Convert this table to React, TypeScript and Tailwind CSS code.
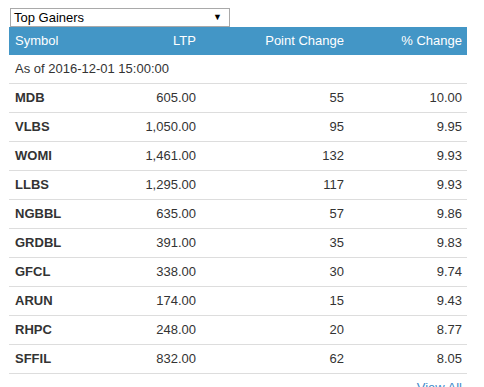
import React from 'react';

type Row = { symbol: string; ltp: string; point: string; pct: string };

const rows: Row[] = [
  { symbol: 'MDB', ltp: '605.00', point: '55', pct: '10.00' },
  { symbol: 'VLBS', ltp: '1,050.00', point: '95', pct: '9.95' },
  { symbol: 'WOMI', ltp: '1,461.00', point: '132', pct: '9.93' },
  { symbol: 'LLBS', ltp: '1,295.00', point: '117', pct: '9.93' },
  { symbol: 'NGBBL', ltp: '635.00', point: '57', pct: '9.86' },
  { symbol: 'GRDBL', ltp: '391.00', point: '35', pct: '9.83' },
  { symbol: 'GFCL', ltp: '338.00', point: '30', pct: '9.74' },
  { symbol: 'ARUN', ltp: '174.00', point: '15', pct: '9.43' },
  { symbol: 'RHPC', ltp: '248.00', point: '20', pct: '8.77' },
  { symbol: 'SFFIL', ltp: '832.00', point: '62', pct: '8.05' },
];

const cols = 'grid grid-cols-[96px_96px_148px_118px]';

const App: React.FC = () => {
  return (
    <div className="w-[484px] h-[387px] overflow-hidden bg-white text-[12px] text-[#333] font-['Liberation_Sans',Arial,sans-serif]">
      <div className="pt-[8px] pl-[10px]">
        <div className="w-[220px] h-[19px] border border-[#a9a9a9] flex items-center justify-between pl-[3px] pr-[7px] text-[13px] text-black">
          <span>Top Gainers</span>
          <span className="text-[9px]">▼</span>
        </div>
      </div>

      <div className="ml-[9px] w-[458px]">
        {/* header */}
        <div className={`${cols} h-[28px] items-center bg-[#4396c6] text-white text-[13px]`}>
          <div className="pl-[6px]">Symbol</div>
          <div className="text-right pr-[5px]">LTP</div>
          <div className="text-right pr-[5px]">Point Change</div>
          <div className="text-right pr-[5px]">% Change</div>
        </div>

        <div className="h-[29px] flex items-center pl-[6px] border-b border-[#dddddd] text-[13px]">
          As of 2016-12-01 15:00:00
        </div>

        {rows.map((r) => (
          <div key={r.symbol} className={`${cols} h-[29px] items-center border-b border-[#dddddd] text-[13px]`}>
            <div className="pl-[6px] font-bold">{r.symbol}</div>
            <div className="text-right pr-[5px]">{r.ltp}</div>
            <div className="text-right pr-[5px]">{r.point}</div>
            <div className="text-right pr-[5px]">{r.pct}</div>
          </div>
        ))}

        <div className="flex justify-end pr-[5px] pt-[4px]">
          <a className="text-[#428bca] text-[13px]">View All</a>
        </div>
      </div>
    </div>
  );
};

export default App;
